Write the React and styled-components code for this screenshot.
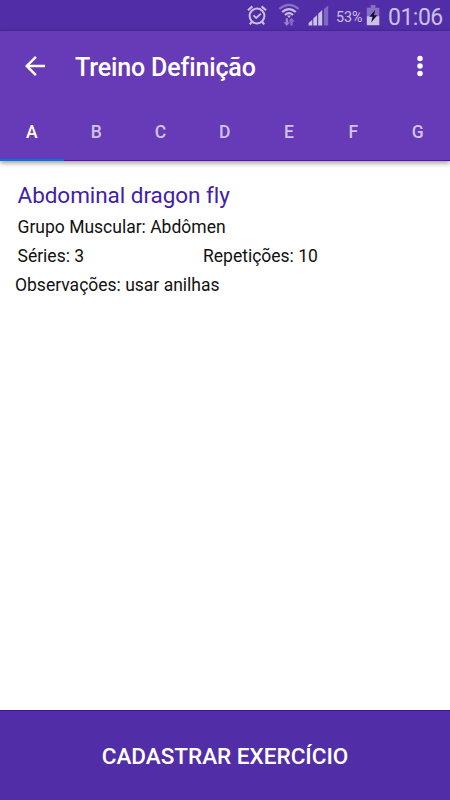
import React, { useState } from 'react';
import styled, { createGlobalStyle } from 'styled-components';

const GlobalStyle = createGlobalStyle`
  * {
    box-sizing: border-box;
  }

  body {
    margin: 0;
    background: #fff;
    font-family: Roboto, sans-serif;
  }
`;

const Screen = styled.div`
  display: flex;
  flex-direction: column;
  width: 450px;
  height: 800px;
  overflow: hidden;
`;

const StatusBar = styled.div`
  flex: none;
  display: flex;
  justify-content: flex-end;
  height: 31px;
  padding-right: 8px;
  background: #512da8;
  border-bottom: 1px solid #4a2a9c;
  color: #cbc0e5;

  svg {
    flex: none;
    display: block;
  }
`;

const StatusIcons = styled.div`
  display: flex;
  gap: 8.5px;
`;

const Percent = styled.span`
  width: 27px;
  margin: 0 3px 0 7px;
  font-size: 14.3px;
  line-height: 34px;
  white-space: nowrap;
`;

const Clock = styled.span`
  width: 54px;
  margin-left: 8px;
  font-size: 23px;
  line-height: 35px;
  letter-spacing: -0.5px;
  white-space: nowrap;
`;

const Header = styled.header`
  flex: none;
  position: relative;
  height: 130px;
  background: #673ab7;
  box-shadow: 0 2px 5px rgba(0, 0, 0, 0.4);
`;

const Toolbar = styled.div`
  display: flex;
  align-items: center;
  height: 70px;
  padding: 0 15px 0 20px;
  color: #fff;
`;

const IconButton = styled.button`
  display: flex;
  padding: 0;
  border: 0;
  background: none;
  color: inherit;
`;

const Title = styled.h1`
  flex: 1;
  margin: 3px 0 0 25px;
  font-size: 25px;
  font-weight: 500;
  line-height: 30px;
  letter-spacing: -0.14px;
`;

const Tabs = styled.nav`
  display: grid;
  grid-template-columns: repeat(7, 1fr);
  height: 60px;
`;

const Tab = styled.button`
  padding: 2px 0.5px 0 0;
  border: 0;
  background: none;
  box-shadow: inset 0 ${({ $active }) => ($active ? '-2px #0874d9' : '-1px #5a0fb8')};
  color: ${({ $active }) => ($active ? '#fff' : '#d1c4e9')};
  font-family: inherit;
  font-size: 17.5px;
  font-weight: 500;
`;

const Content = styled.main`
  flex: 1;
  padding: 20px 15px 0;
  color: #111;
  font-size: 17.5px;
`;

const ExerciseName = styled.h2`
  margin: 0 0 3px 2.5px;
  color: #4320a8;
  font-size: 22.5px;
  font-weight: 400;
  line-height: 29px;
  letter-spacing: -0.05px;
`;

const Line = styled.div`
  display: flex;
  height: 28.75px;
  padding-left: ${({ $indent }) => $indent || 0}px;
  line-height: 28px;
`;

const Cell = styled.span`
  width: 185.5px;
`;

const Submit = styled.button`
  flex: none;
  height: 90px;
  padding: 1px 0 0;
  border: 0;
  border-top: 1px solid #4312a8;
  background: #512da8;
  color: #fff;
  font-family: inherit;
  font-size: 22.5px;
  font-weight: 500;
`;

const AlarmIcon = () => (
  <svg width="24" height="30" viewBox="0 0 24 30" fill="none" stroke="currentColor">
    <circle cx="12" cy="16" r="7.4" strokeWidth="2" />
    <path d="M3 10.2l4.4-3.8M21 10.2l-4.4-3.8M6.8 22l-2 2.4M17.2 22l2 2.4" strokeWidth="2.1" />
    <path d="M8.4 15.4l2.8 2.6 4.7-4.4" strokeWidth="1.9" />
  </svg>
);

const WifiIcon = () => (
  <svg width="22" height="30" viewBox="0 0 22 30" fill="none" stroke="currentColor">
    <path d="M1.3 8.8Q11 .8 20.7 8.8" strokeWidth="2.2" opacity=".45" />
    <path d="M4.2 12Q11 6.2 17.8 12M7 15Q11 11.4 15 15" strokeWidth="2.2" />
    <path d="M9 15.6h4l-2 2.3z" fill="currentColor" stroke="none" />
    <g fill="currentColor" stroke="none" opacity=".6">
      <path d="M7.7 18.2h2.3v4h2l-3.2 3.7-3.2-3.7h2.1z" />
      <path d="M12.4 25.4h2.3v-4h2l-3.2-3.7-3.2 3.7h2.1z" opacity=".75" />
    </g>
  </svg>
);

const SignalIcon = () => (
  <svg width="21" height="30" viewBox="0 0 21 30" fill="currentColor">
    <path d="M.6 25.5v-2.4l3.7-3.3v5.7zM5.3 25.5v-6.9L9.1 15v10.5zM10.2 25.5V13.8l4-3.9v15.6z" />
    <path d="M15.9 25.5V9l4.3-3.5v20z" opacity=".4" />
  </svg>
);

const BatteryIcon = () => (
  <svg width="14" height="30" viewBox="0 0 14 30" fill="currentColor">
    <path d="M4.7 5h4.7v2.7h3.9v8.6H.8V7.7h3.9z" opacity=".45" />
    <path d="M.8 16.2h12.5v9H.8z" />
    <path d="M9.2 10l-5.8 6.8h3.1l-1.3 5.8 6-7.3H8z" fill="#160f35" />
  </svg>
);

const BackIcon = () => (
  <svg width="30" height="30" viewBox="0 0 24 24" fill="currentColor">
    <path d="M20 11H7.83l5.59-5.59L12 4l-8 8 8 8 1.41-1.41L7.83 13H20v-2z" />
  </svg>
);

const MoreIcon = () => (
  <svg width="30" height="30" viewBox="0 0 24 24" fill="currentColor">
    <circle cx="12" cy="6" r="2.2" />
    <circle cx="12" cy="12" r="2.2" />
    <circle cx="12" cy="18" r="2.2" />
  </svg>
);

const tabs = ['A', 'B', 'C', 'D', 'E', 'F', 'G'];

const App = () => {
  const [current, setCurrent] = useState('A');

  return (
    <Screen>
      <GlobalStyle />
      <StatusBar>
        <StatusIcons>
          <AlarmIcon />
          <WifiIcon />
          <SignalIcon />
        </StatusIcons>
        <Percent>53%</Percent>
        <BatteryIcon />
        <Clock>01:06</Clock>
      </StatusBar>
      <Header>
        <Toolbar>
          <IconButton aria-label="Voltar">
            <BackIcon />
          </IconButton>
          <Title>Treino Definição</Title>
          <IconButton aria-label="Mais opções">
            <MoreIcon />
          </IconButton>
        </Toolbar>
        <Tabs>
          {tabs.map((tab) => (
            <Tab key={tab} $active={tab === current} onClick={() => setCurrent(tab)}>
              {tab}
            </Tab>
          ))}
        </Tabs>
      </Header>
      <Content>
        <ExerciseName>Abdominal dragon fly</ExerciseName>
        <Line $indent={2.5}>Grupo Muscular: Abdômen</Line>
        <Line $indent={2.5}>
          <Cell>Séries: 3</Cell>
          <Cell>Repetições: 10</Cell>
        </Line>
        <Line>Observações: usar anilhas</Line>
      </Content>
      <Submit>CADASTRAR EXERCÍCIO</Submit>
    </Screen>
  );
};

export default App;
